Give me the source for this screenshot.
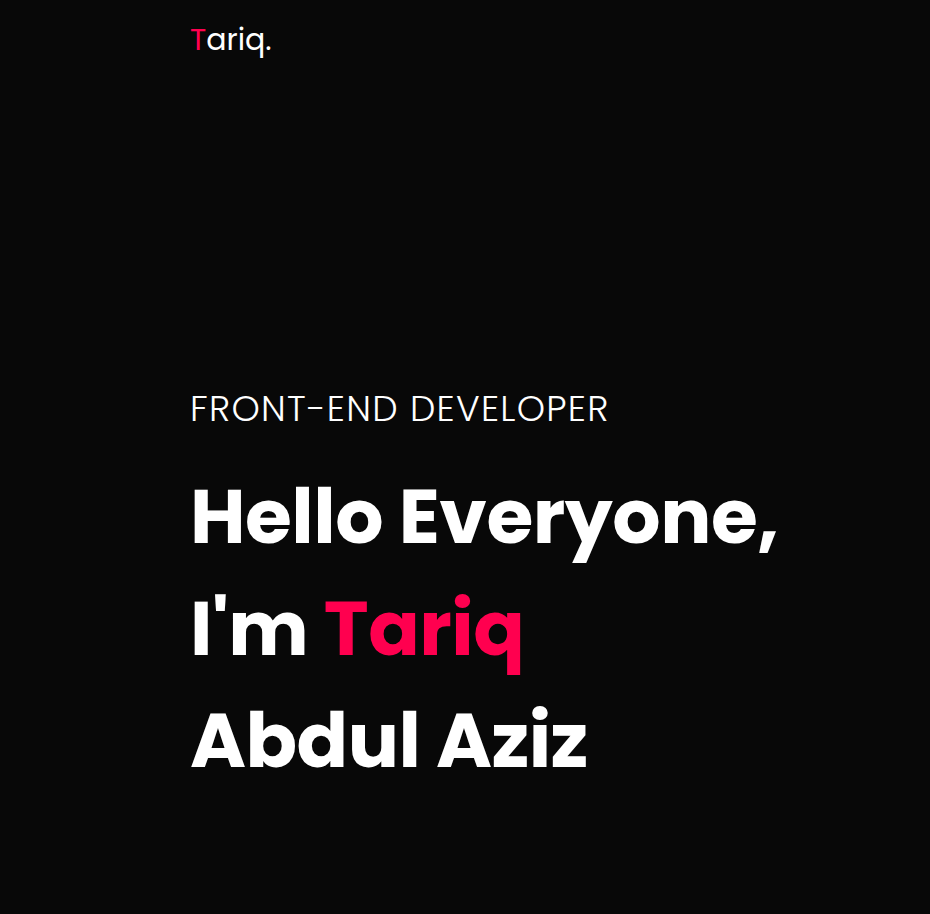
export default function App() {
  return (
    <div className="min-h-[914px] bg-[#080808] text-white font-['Poppins','Inter',sans-serif]">
      {/* Nav */}
      <nav className="pl-[190px] pt-[20px]">
        <span className="text-[30px] leading-[40px] font-normal">
          <span className="text-[#ff004f]">T</span>ariq.
        </span>
      </nav>

      {/* Hero */}
      <section className="pl-[190px] pt-[327px]">
        <p className="text-[36px] leading-[44px] font-light tracking-[1.25px]">FRONT-END DEVELOPER</p>
        <h1 className="mt-[30px] text-[76px] leading-[112px] font-bold tracking-[-0.5px]">
          Hello Everyone,
          <br />
          I'm <span className="text-[#ff004f]">Tariq</span>
          <br />
          Abdul Aziz
        </h1>
      </section>
    </div>
  )
}
